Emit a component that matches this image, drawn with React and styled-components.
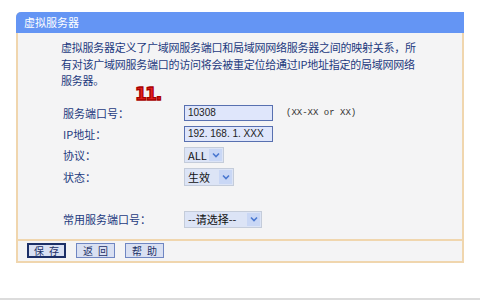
import React from 'react'
import styled, { createGlobalStyle } from 'styled-components'

const Global = createGlobalStyle`
  html, body {
    margin: 0;
    padding: 0;
    background: #fff;
  }
  body {
    width: 480px;
    height: 300px;
    overflow: hidden;
    font-family: "Noto Sans CJK SC", "DejaVu Sans", sans-serif;
  }
`

const Page = styled.div`
  width: 480px;
  height: 300px;
  padding: 12px 0 0 16px;
  box-sizing: border-box;
  border-bottom: 2px solid #dcdcdc;
`

const Panel = styled.div`
  width: 448px;
  border-left: 2px solid #f0d6ae;
  border-right: 2px solid #f0d6ae;
  border-bottom: 2px solid #f0d6ae;
  box-sizing: border-box;
  background: #f4f4f5;
  border-top-left-radius: 5px;
`

const TitleBar = styled.div`
  height: 21px;
  margin: 0 -2px;
  background: #6495f4;
  border-top-left-radius: 5px;
  color: #fff;
  font-size: 11px;
  line-height: 21px;
  padding-left: 8px;
`

const Body = styled.div`
  padding: 6px 0 11px 43px;
  color: #1d3a7e;
  font-size: 11px;
  position: relative;
`

const Desc = styled.p`
  margin: 0 0 16px;
  line-height: 16.5px;
  letter-spacing: -0.25px;
`

const Badge = styled.span`
  position: absolute;
  left: 117px;
  top: 51px;
  font-family: "DejaVu Sans", sans-serif;
  font-weight: 900;
  font-size: 17px;
  color: #e52222;
  -webkit-text-stroke: 1.3px #a80000;
  letter-spacing: -1.5px;
`

const Form = styled.div`
  display: grid;
  grid-template-columns: 123px auto;
  row-gap: 5px;
  align-items: center;
`

const Label = styled.div`
  padding-left: 2px;
  margin-top: ${p => p.gap || 0}px;
`

const Field = styled.div`
  display: flex;
  align-items: center;
  gap: 13px;
  margin-top: ${p => p.gap || 0}px;
`

const Input = styled.div`
  width: 89px;
  height: 16px;
  box-sizing: border-box;
  border: 1px solid #5870b0;
  background: #dfe6fb;
  color: #222;
  font-family: "Liberation Sans", sans-serif;
  font-size: 10px;
  line-height: 14px;
  padding-left: 3px;
  white-space: nowrap;
  overflow: hidden;
`

const Hint = styled.span`
  font-family: "Liberation Mono", monospace;
  font-size: 9px;
  color: #333;
`

const Select = styled.div`
  display: inline-flex;
  align-items: center;
  height: ${p => p.h || 16}px;
  width: ${p => p.w}px;
  box-sizing: border-box;
  border: 1px solid #c4ccda;
  background: #dce4f6;
  color: #111;
  font-size: 11px;
  padding-left: 3px;
  justify-content: space-between;
  white-space: nowrap;
`

const Arrow = styled.span`
  width: 13px;
  height: calc(100% - 2px);
  margin-right: 1px;
  background: #c9d7f5;
  display: flex;
  align-items: center;
  justify-content: center;
`

const Footer = styled.div`
  border-top: 2px solid #f0d6ae;
  display: flex;
  gap: 10px;
  padding: 2px 0 3px 9px;
`

const Button = styled.div`
  width: 39px;
  height: 15px;
  box-sizing: border-box;
  border: ${p => (p.primary ? '2px solid #1c2f66' : '1px solid #6f86c2')};
  background: #d9e0f2;
  color: #1c2f66;
  font-size: 10px;
  line-height: ${p => (p.primary ? 11 : 13)}px;
  text-align: center;
  letter-spacing: 5px;
  padding-left: 5px;
`

const Chevron = () => (
  <svg width="8" height="6" viewBox="0 0 8 6">
    <path d="M1 1.5 L4 4.5 L7 1.5" fill="none" stroke="#4a78d0" strokeWidth="1.6" />
  </svg>
)

export default function App() {
  return (
    <Page>
      <Global />
      <Panel>
        <TitleBar>虚拟服务器</TitleBar>
        <Body>
          <Desc>
            虚拟服务器定义了广域网服务端口和局域网网络服务器之间的映射关系，所
            <br />
            有对该广域网服务端口的访问将会被重定位给通过IP地址指定的局域网网络
            <br />
            服务器。
          </Desc>
          <Badge>11.</Badge>
          <Form>
            <Label>服务端口号：</Label>
            <Field>
              <Input>10308</Input>
              <Hint>(XX-XX or XX)</Hint>
            </Field>
            <Label>IP地址：</Label>
            <Field>
              <Input>192. 168. 1. XXX</Input>
            </Field>
            <Label>协议：</Label>
            <Field>
              <Select w={40}>
                ALL<Arrow><Chevron /></Arrow>
              </Select>
            </Field>
            <Label>状态：</Label>
            <Field>
              <Select w={50} h={18}>
                生效<Arrow><Chevron /></Arrow>
              </Select>
            </Field>
            <Label gap={20}>常用服务端口号：</Label>
            <Field gap={20}>
              <Select w={78} h={17}>
                --请选择--<Arrow><Chevron /></Arrow>
              </Select>
            </Field>
          </Form>
        </Body>
        <Footer>
          <Button primary>保存</Button>
          <Button>返回</Button>
          <Button>帮助</Button>
        </Footer>
      </Panel>
    </Page>
  )
}
